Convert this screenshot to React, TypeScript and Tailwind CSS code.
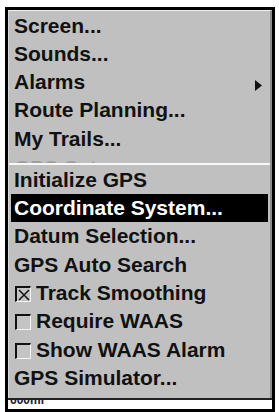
import React from "react";

const font = { fontFamily: '"Liberation Sans", Arial, sans-serif' };

function Row({ children, hi }: { children: React.ReactNode; hi?: boolean }) {
  return (
    <div
      className={`h-[28.3px] flex items-center pl-[3px] text-[21px] leading-[28px] font-bold whitespace-nowrap ${
        hi ? "bg-black text-white" : "text-[#111]"
      }`}
    >
      {children}
    </div>
  );
}

function Check({ checked }: { checked?: boolean }) {
  return (
    <span className="w-[16px] h-[16px] mr-[5px] ml-[1px] mt-[2px] flex items-center justify-center border-t-2 border-l-2 border-[#111] border-r border-b border-r-[#f4f4f4] border-b-[#f4f4f4] bg-[#c4c4c4]">
      {checked && (
        <svg width="12" height="12" viewBox="0 0 12 12">
          <path d="M1 1 L11 11 M11 1 L1 11" stroke="#111" strokeWidth="1.5" />
        </svg>
      )}
    </span>
  );
}

export default function App() {
  return (
    <div className="w-[279px] h-[412px] bg-white pt-[7px] pl-[5px] overflow-hidden" style={font}>
      <div className="w-[270px] h-[405px] border-[3px] border-black flex flex-col">
        <div className="h-[388px] bg-[#c0c0c0] border-t border-t-[#f0f0f0] border-l border-l-[#d8d8d8] border-r-2 border-r-[#8c8c8c] flex flex-col">
          <div className="pt-[0.5px] pl-[5px] text-[21px] font-bold text-[#111] whitespace-nowrap">
            <div className="h-[28.25px] leading-[28px]">Screen...</div>
            <div className="h-[28.25px] leading-[28px]">Sounds...</div>
            <div className="h-[28.25px] leading-[28px] flex items-start">
              <span>Alarms</span>
              <svg className="ml-auto mr-[8px] mt-[12px]" width="7" height="11" viewBox="0 0 7 11">
                <path d="M0 0 L7 5.5 L0 11 Z" fill="#111" />
              </svg>
            </div>
            <div className="h-[28.25px] leading-[28px]">Route Planning...</div>
            <div className="h-[28.25px] leading-[28px]">My Trails...</div>
            <div className="h-[10.25px] overflow-hidden">
              <div className="h-[28.25px] leading-[28px] mt-[1px] text-[#8a8a8a] opacity-60">
                GPS Setup...
              </div>
            </div>
          </div>
          <div className="h-[2px] bg-[#f8f8f8]" />
          <div className="pt-[0.7px] px-[2px] flex flex-col">
            <Row>Initialize GPS</Row>
            <Row hi>Coordinate System...</Row>
            <Row>Datum Selection...</Row>
            <Row>GPS Auto Search</Row>
            <Row>
              <Check checked />
              Track Smoothing
            </Row>
            <Row>
              <Check />
              Require WAAS
            </Row>
            <Row>
              <Check />
              Show WAAS Alarm
            </Row>
            <Row>GPS Simulator...</Row>
          </div>
        </div>
        <div className="h-[2px] bg-[#222]" />
        <div className="flex-1 bg-white overflow-hidden relative">
          <div className="text-[12px] leading-[12px] font-bold text-[#222] pl-[2px] -mt-[6px]">600mi</div>
        </div>
      </div>
    </div>
  );
}
